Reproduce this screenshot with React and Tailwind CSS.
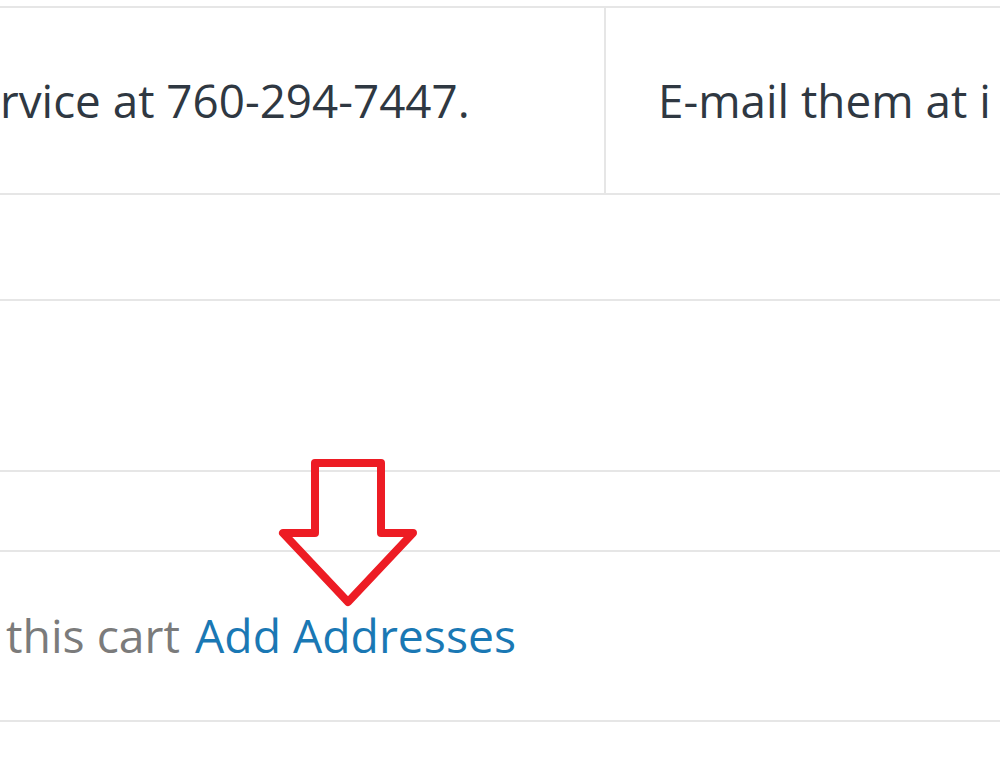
export default function App() {
  const font = { fontFamily: '"Open Sans", "Noto Sans", sans-serif' };
  return (
    <div className="relative w-[1000px] h-[766px] bg-white overflow-hidden pt-[6px]" style={font}>
      <div className="flex h-[189px] border-y-2 border-[#e6e6e6]">
        <div className="w-[606px] shrink-0 border-r-2 border-[#e6e6e6] flex items-center overflow-hidden">
          <span className="text-[45.8px] text-[#2f3842] whitespace-nowrap">rvice at 760-294-7447.</span>
        </div>
        <div className="flex-1 flex items-center overflow-hidden pl-[52px]">
          <span className="text-[45.8px] text-[#2f3842] whitespace-nowrap">E-mail them at i</span>
        </div>
      </div>
      <div className="h-[106px] border-b-2 border-[#e6e6e6]"></div>
      <div className="h-[171px] border-b-2 border-[#e6e6e6]"></div>
      <div className="h-[80px] border-b-2 border-[#e6e6e6]"></div>
      <div className="h-[170px] border-b-2 border-[#e6e6e6] flex items-center pl-[6px]">
        <span className="text-[46.3px] whitespace-nowrap">
          <span className="text-[#7b7b7b]">this cart </span>
          <span className="text-[#1a78b4] ml-[3px]">Add Addresses</span>
        </span>
      </div>
      <svg className="absolute left-0 top-0" width="1000" height="766" viewBox="0 0 1000 766">
        <polygon
          points="315,463 381,463 381,533 413,533 348,602 283,533 315,533"
          fill="none"
          stroke="#ed1c24"
          strokeWidth="8"
          strokeLinejoin="round"
        />
      </svg>
    </div>
  );
}
